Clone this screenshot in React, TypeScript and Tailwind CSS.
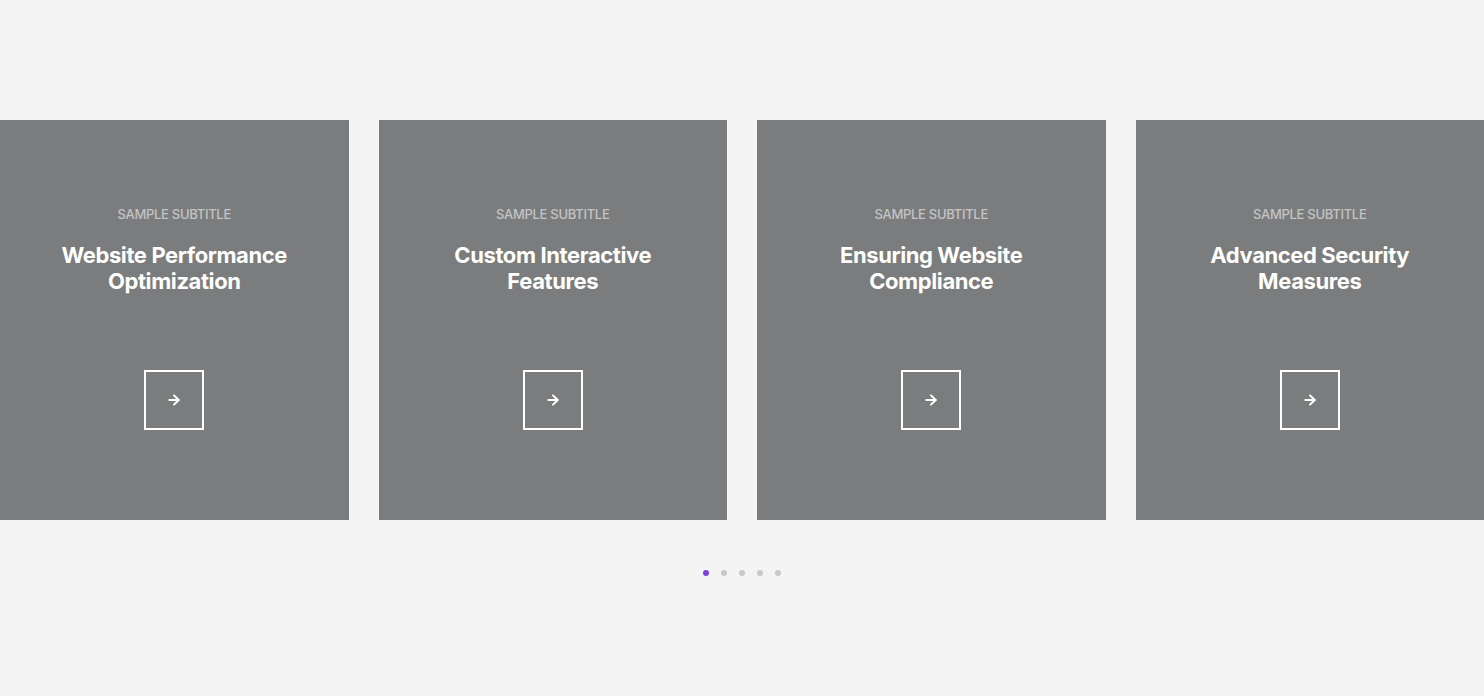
import { ArrowRight } from 'lucide-react';

const cards = [
  { subtitle: 'Sample Subtitle', title: ['Website Performance', 'Optimization'] },
  { subtitle: 'Sample Subtitle', title: ['Custom Interactive', 'Features'] },
  { subtitle: 'Sample Subtitle', title: ['Ensuring Website', 'Compliance'] },
  { subtitle: 'Sample Subtitle', title: ['Advanced Security', 'Measures'] },
];

function ServiceCard({ subtitle, title }: { subtitle: string; title: string[] }) {
  return (
    <div className="flex h-[400px] flex-col items-center bg-[#7b7c7d] pt-[86px]">
      <span className="text-[13px] font-medium uppercase leading-[16px] tracking-[-0.3px] text-[#c4c4c4]">
        {subtitle}
      </span>
      <h3 className="mt-[20px] text-center text-[22px] font-bold leading-[26px] tracking-[-0.4px] text-white">
        {title[0]}
        <br />
        {title[1]}
      </h3>
      <button className="mt-[76px] flex h-[60px] w-[60px] shrink-0 items-center justify-center border-2 border-white text-white">
        <ArrowRight size={16} strokeWidth={3} />
      </button>
    </div>
  );
}

export default function App() {
  return (
    <div
      className="min-h-[696px] bg-[#f4f4f4] pt-[120px]"
      style={{ fontFamily: 'Inter, "Open Sans", sans-serif' }}
    >
      {/* Slider track */}
      <div className="grid grid-cols-4 gap-[30px]">
        {cards.map((c) => (
          <ServiceCard key={c.title[0]} subtitle={c.subtitle} title={c.title} />
        ))}
      </div>

      {/* Pagination */}
      <div className="mt-[50px] flex justify-center gap-[12px]">
        {[0, 1, 2, 3, 4].map((i) => (
          <span
            key={i}
            className={i === 0 ? 'h-[6px] w-[6px] rounded-full bg-[#7b3fe4]' : 'h-[6px] w-[6px] rounded-full bg-[#c8c8c8]'}
          />
        ))}
      </div>
    </div>
  );
}
